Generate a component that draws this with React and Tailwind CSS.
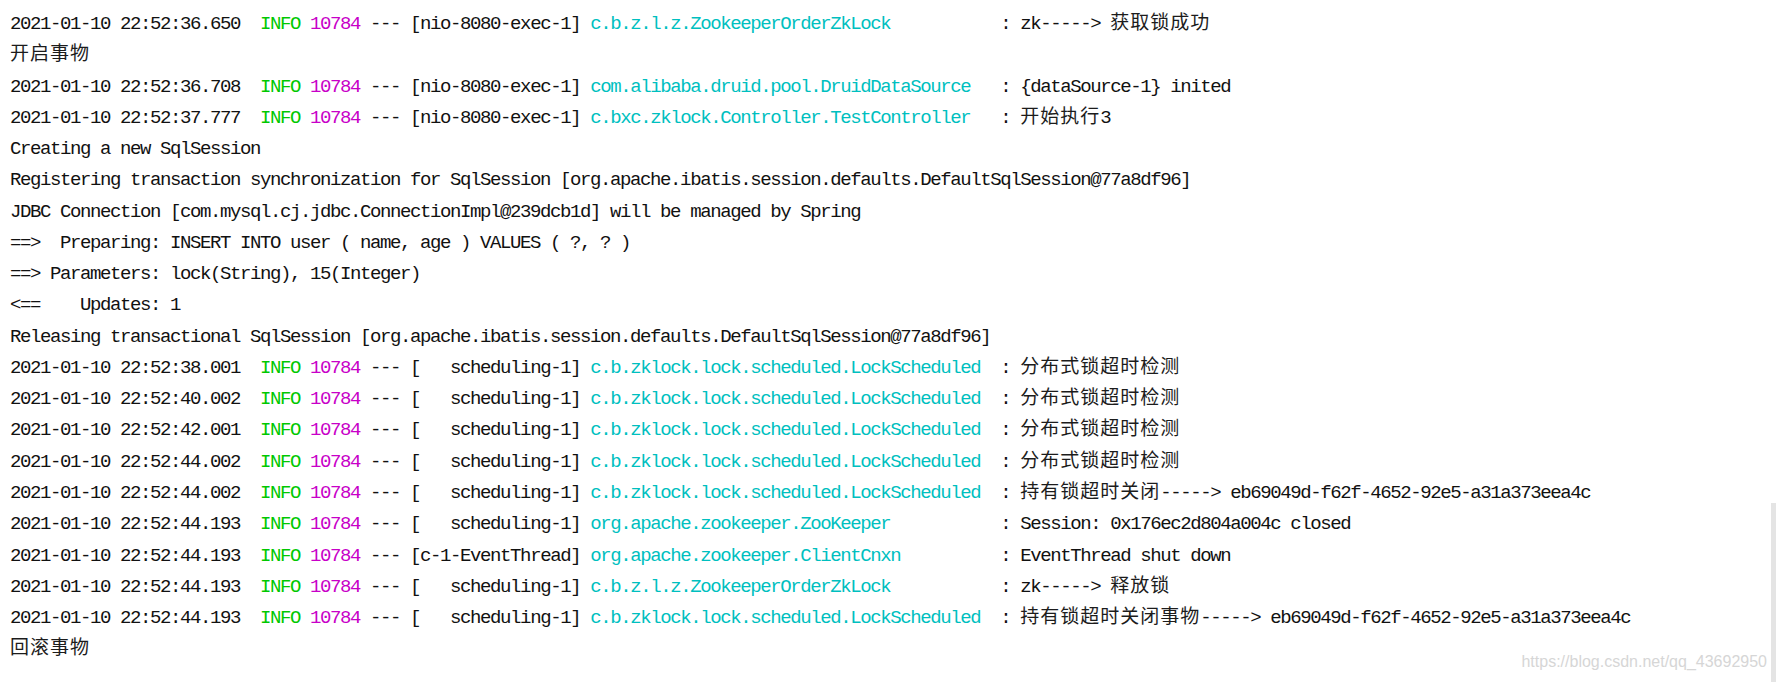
const CJK = /([\u2e80-\u9fff\uff00-\uffef]+)/

// split ascii / chinese runs so the chinese keeps a full 2-column width
function Txt({ s }) {
  return s.split(CJK).map((part, i) =>
    i % 2 ? (
      <span key={i} className="font-['Noto_Sans_CJK_SC',sans-serif] text-[19px] leading-[0] tracking-[1px] text-[#1c1c1c]">
        {part}
      </span>
    ) : (
      part
    )
  )
}

const ZK = 'c.b.z.l.z.ZookeeperOrderZkLock'
const SCHED = 'c.b.zklock.lock.scheduled.LockScheduled'

const rows = [
  { t: '22:52:36.650', th: 'nio-8080-exec-1', lg: ZK, m: 'zk-----> 获取锁成功' },
  { p: '开启事物' },
  { t: '22:52:36.708', th: 'nio-8080-exec-1', lg: 'com.alibaba.druid.pool.DruidDataSource', m: '{dataSource-1} inited' },
  { t: '22:52:37.777', th: 'nio-8080-exec-1', lg: 'c.bxc.zklock.Controller.TestController', m: '开始执行3' },
  { p: 'Creating a new SqlSession' },
  { p: 'Registering transaction synchronization for SqlSession [org.apache.ibatis.session.defaults.DefaultSqlSession@77a8df96]' },
  { p: 'JDBC Connection [com.mysql.cj.jdbc.ConnectionImpl@239dcb1d] will be managed by Spring' },
  { p: '==>  Preparing: INSERT INTO user ( name, age ) VALUES ( ?, ? ) ' },
  { p: '==> Parameters: lock(String), 15(Integer)' },
  { p: '<==    Updates: 1' },
  { p: 'Releasing transactional SqlSession [org.apache.ibatis.session.defaults.DefaultSqlSession@77a8df96]' },
  { t: '22:52:38.001', th: 'scheduling-1', lg: SCHED, m: '分布式锁超时检测' },
  { t: '22:52:40.002', th: 'scheduling-1', lg: SCHED, m: '分布式锁超时检测' },
  { t: '22:52:42.001', th: 'scheduling-1', lg: SCHED, m: '分布式锁超时检测' },
  { t: '22:52:44.002', th: 'scheduling-1', lg: SCHED, m: '分布式锁超时检测' },
  { t: '22:52:44.002', th: 'scheduling-1', lg: SCHED, m: '持有锁超时关闭-----> eb69049d-f62f-4652-92e5-a31a373eea4c' },
  { t: '22:52:44.193', th: 'scheduling-1', lg: 'org.apache.zookeeper.ZooKeeper', m: 'Session: 0x176ec2d804a004c closed' },
  { t: '22:52:44.193', th: 'c-1-EventThread', lg: 'org.apache.zookeeper.ClientCnxn', m: 'EventThread shut down' },
  { t: '22:52:44.193', th: 'scheduling-1', lg: ZK, m: 'zk-----> 释放锁' },
  { t: '22:52:44.193', th: 'scheduling-1', lg: SCHED, m: '持有锁超时关闭事物-----> eb69049d-f62f-4652-92e5-a31a373eea4c' },
  { p: '回滚事物' },
]

function Row({ r }) {
  if (r.p) {
    return (
      <div className="h-[31.27px] leading-[31.27px] whitespace-pre">
        <Txt s={r.p} />
      </div>
    )
  }
  return (
    <div className="h-[31.27px] leading-[31.27px] whitespace-pre">
      {`2021-01-10 ${r.t}  `}
      <span className="text-[#00c800]">INFO</span>{' '}
      <span className="text-[#c800c8]">10784</span>
      {` --- [${r.th.padStart(15)}] `}
      <span className="text-[#00bfbf]">{r.lg.padEnd(40)}</span>
      {' : '}
      <Txt s={r.m} />
    </div>
  )
}

export default function App() {
  return (
    <div className="relative flex h-[682px] w-[1776px] overflow-hidden bg-white">
      <div className="flex-1 pl-[10px] pt-[9px] font-['Liberation_Mono',monospace] text-[19px] tracking-[-1.4px] text-[#111]">
        {rows.map((r, i) => (
          <Row key={i} r={r} />
        ))}
      </div>
      <div className="flex w-[5px] flex-col">
        <div className="h-[503px]" />
        <div className="flex-1 bg-[#e4e4e4]" />
      </div>
      <div className="absolute bottom-[8px] right-[9px] font-['Liberation_Sans',sans-serif] text-[16px] text-[#d6d6d6]">
        https://blog.csdn.net/qq_43692950
      </div>
    </div>
  )
}
